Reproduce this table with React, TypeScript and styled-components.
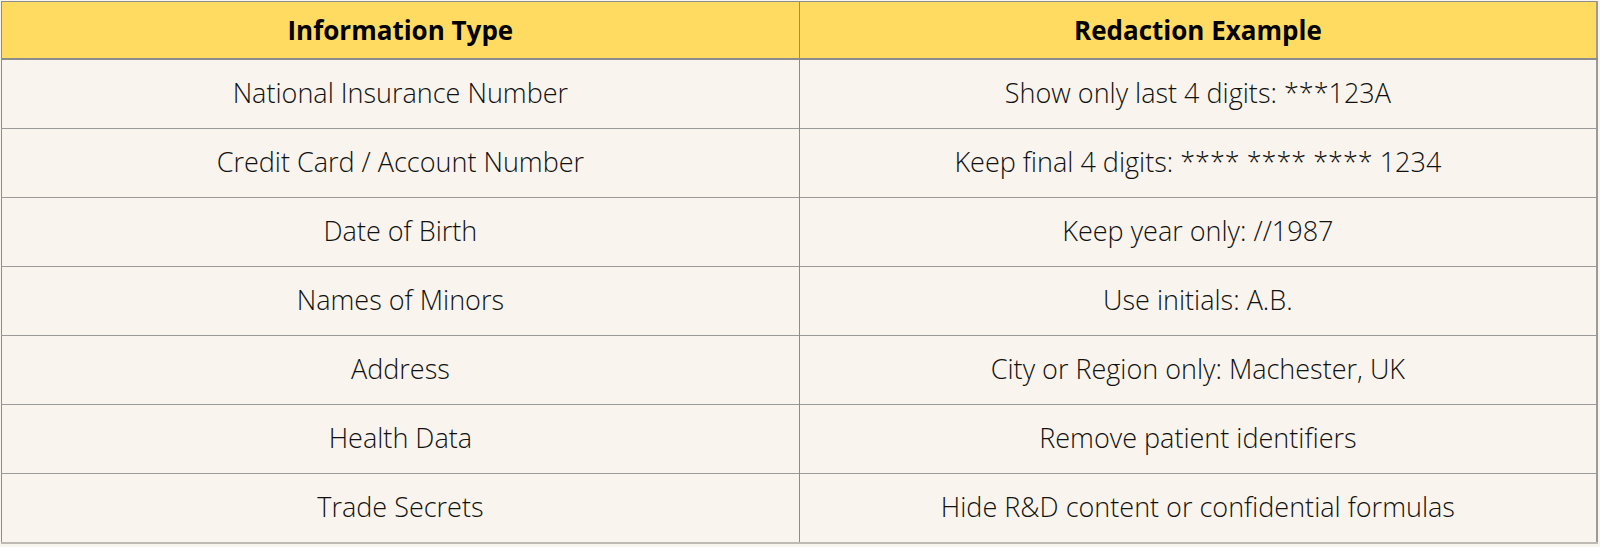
import React from "react";
import styled, { createGlobalStyle } from "styled-components";

const Global = createGlobalStyle`
  html, body { margin: 0; padding: 0; background: #f8f5ee; }
  body { font-family: "Open Sans", "Noto Sans", sans-serif; }
`;

const Wrap = styled.div`
  padding: 1px 2px 4px 1px;
  background: #f8f5ee;
`;

const Table = styled.table`
  width: 100%;
  border-collapse: collapse;
  table-layout: fixed;
  background: #f9f5ee;
  border: 1px solid #8c8c8c;
  border-bottom: 2px solid #bdbab4;
  border-right: 2px solid #9a9a9a;
`;

const HeadCell = styled.th`
  background: #ffdb62;
  height: 56px;
  padding: 0;
  font-family: "Open Sans", sans-serif;
  font-weight: 700;
  font-size: 26px;
  line-height: 30px;
  color: #000;
  text-align: center;
  border-left: 1px solid #8c8c8c;
  border-bottom: 2px solid #8c8c8c;
  &:first-child { border-left: none; }
`;

const Cell = styled.td`
  height: 66px;
  padding: 0 0 2px;
  font-family: "Open Sans", sans-serif;
  font-weight: 300;
  font-size: 27px;
  line-height: 32px;
  color: #111;
  text-align: center;
  border-left: 1px solid #8c8c8c;
  border-top: 1px solid #9a9a9a;
  &:first-child { border-left: none; }
`;

const rows: [string, string][] = [
  ["National Insurance Number", "Show only last 4 digits: ***123A"],
  ["Credit Card / Account Number", "Keep final 4 digits: **** **** **** 1234"],
  ["Date of Birth", "Keep year only: //1987"],
  ["Names of Minors", "Use initials: A.B."],
  ["Address", "City or Region only: Machester, UK"],
  ["Health Data", "Remove patient identifiers"],
  ["Trade Secrets", "Hide R&D content or confidential formulas"],
];

export default function App() {
  return (
    <>
      <Global />
      <Wrap>
        <Table>
          <thead>
            <tr>
              <HeadCell>Information Type</HeadCell>
              <HeadCell>Redaction Example</HeadCell>
            </tr>
          </thead>
          <tbody>
            {rows.map(([a, b]) => (
              <tr key={a}>
                <Cell>{a}</Cell>
                <Cell>{b}</Cell>
              </tr>
            ))}
          </tbody>
        </Table>
      </Wrap>
    </>
  );
}
